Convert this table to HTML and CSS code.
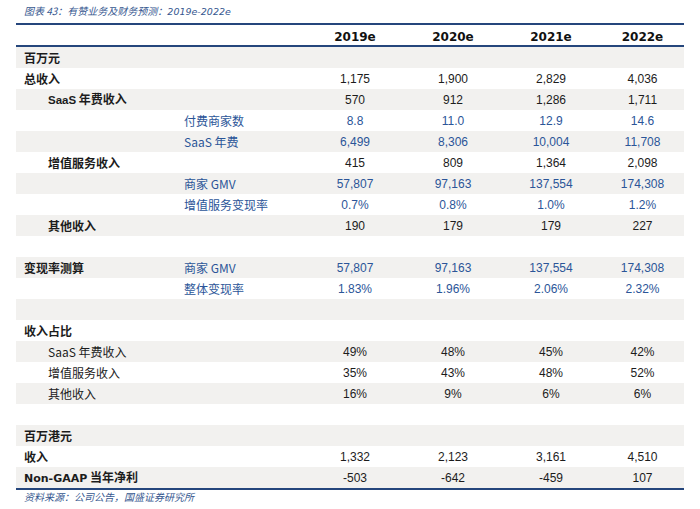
FILE: index.html
```html
<!DOCTYPE html>
<html lang="zh-CN">
<head>
<meta charset="utf-8">
<title>有赞业务及财务预测</title>
<link rel="stylesheet" href="styles.css">
</head>
<body>
<div class="page">
  <div class="caption">图表 43：有赞业务及财务预测：<span class="lat">2019e-2022e</span></div>
  <table class="fin">
    <colgroup>
      <col class="c-a"><col class="c-b"><col class="c-1"><col class="c-2"><col class="c-3"><col class="c-4">
    </colgroup>
    <thead>
      <tr><th></th><th></th><th>2019e</th><th>2020e</th><th>2021e</th><th>2022e</th></tr>
    </thead>
    <tbody>
      <tr><td class="l1 b">百万元</td><td></td><td></td><td></td><td></td><td></td></tr>
      <tr><td class="l1 b">总收入</td><td></td><td>1,175</td><td>1,900</td><td>2,829</td><td>4,036</td></tr>
      <tr><td class="l2 b"><span class="latb">SaaS</span> 年费收入</td><td></td><td>570</td><td>912</td><td>1,286</td><td>1,711</td></tr>
      <tr class="blue"><td></td><td class="l3">付费商家数</td><td>8.8</td><td>11.0</td><td>12.9</td><td>14.6</td></tr>
      <tr class="blue"><td></td><td class="l3">SaaS 年费</td><td>6,499</td><td>8,306</td><td>10,004</td><td>11,708</td></tr>
      <tr><td class="l2 b">增值服务收入</td><td></td><td>415</td><td>809</td><td>1,364</td><td>2,098</td></tr>
      <tr class="blue"><td></td><td class="l3">商家 GMV</td><td>57,807</td><td>97,163</td><td>137,554</td><td>174,308</td></tr>
      <tr class="blue"><td></td><td class="l3">增值服务变现率</td><td>0.7%</td><td>0.8%</td><td>1.0%</td><td>1.2%</td></tr>
      <tr><td class="l2 b">其他收入</td><td></td><td>190</td><td>179</td><td>179</td><td>227</td></tr>
      <tr><td></td><td></td><td></td><td></td><td></td><td></td></tr>
      <tr class="blue"><td class="l1 b dark">变现率测算</td><td class="l3">商家 GMV</td><td>57,807</td><td>97,163</td><td>137,554</td><td>174,308</td></tr>
      <tr class="blue"><td></td><td class="l3">整体变现率</td><td>1.83%</td><td>1.96%</td><td>2.06%</td><td>2.32%</td></tr>
      <tr><td></td><td></td><td></td><td></td><td></td><td></td></tr>
      <tr><td class="l1 b">收入占比</td><td></td><td></td><td></td><td></td><td></td></tr>
      <tr><td class="l2">SaaS 年费收入</td><td></td><td>49%</td><td>48%</td><td>45%</td><td>42%</td></tr>
      <tr><td class="l2">增值服务收入</td><td></td><td>35%</td><td>43%</td><td>48%</td><td>52%</td></tr>
      <tr><td class="l2">其他收入</td><td></td><td>16%</td><td>9%</td><td>6%</td><td>6%</td></tr>
      <tr><td></td><td></td><td></td><td></td><td></td><td></td></tr>
      <tr><td class="l1 b">百万港元</td><td></td><td></td><td></td><td></td><td></td></tr>
      <tr><td class="l1 b">收入</td><td></td><td>1,332</td><td>2,123</td><td>3,161</td><td>4,510</td></tr>
      <tr><td class="l1 b"><span class="nong">Non-GAAP</span> 当年净利</td><td></td><td>-503</td><td>-642</td><td>-459</td><td>107</td></tr>
    </tbody>
  </table>
  <div class="source">资料来源：公司公告，国盛证券研究所</div>
</div>
</body>
</html>
```

FILE: styles.css
```css
html, body {
  margin: 0;
  padding: 0;
  background: #ffffff;
}

.page {
  padding-left: 16px;
  width: 668px;
  font-family: "Liberation Sans", "Noto Sans CJK SC", sans-serif;
  color: #1c1c1c;
}

.caption {
  height: 23px;
  line-height: 22px;
  padding-left: 8px;
  font-size: 10px;
  font-style: italic;
  color: #36578f;
  font-family: "Noto Sans CJK SC", sans-serif;
}

.caption .lat {
  font-family: "DejaVu Sans", sans-serif;
  font-size: 9.5px;
}

.fin {
  width: 668px;
  border-collapse: collapse;
  table-layout: fixed;
  border-top: 2px solid #25467c;
  border-bottom: 2px solid #25467c;
  font-size: 12px;
}

.c-a { width: 160px; }
.c-b { width: 129px; }
.c-1 { width: 100px; }
.c-2 { width: 96px; }
.c-3 { width: 100px; }
.c-4 { width: 83px; }

.fin th {
  height: 20px;
  padding: 0;
  line-height: 16px;
  vertical-align: bottom;
  font-family: "DejaVu Sans", sans-serif;
  font-weight: bold;
  font-size: 12px;
  text-align: center;
  color: #111111;
  border-bottom: 2px solid #25467c;
}

.fin td {
  height: 21px;
  padding: 0;
  text-align: center;
  white-space: nowrap;
  line-height: 16px;
}

.fin tbody tr:nth-child(odd) {
  background: #f2f1ef;
}

.fin td.l1,
.fin td.l2,
.fin td.l3 {
  text-align: left;
  font-family: "Noto Sans CJK SC", sans-serif;
}

.fin td.l1 { padding-left: 8px; }
.fin td.l2 { padding-left: 32px; }
.fin td.l3 { padding-left: 8px; }

.fin td.b {
  font-weight: 700;
}

.lat {
  font-family: "Liberation Sans", sans-serif;
}

.latb {
  font-family: "Liberation Sans", sans-serif;
  font-weight: bold;
  font-size: 11.5px;
}

.nong {
  font-family: "DejaVu Sans", sans-serif;
  font-size: 11px;
  font-weight: bold;
}

.blue td {
  color: #2b5598;
}

.blue td.dark {
  color: #1c1c1c;
}

.source {
  padding-left: 8px;
  height: 18px;
  line-height: 13px;
  font-size: 10px;
  font-style: italic;
  color: #36578f;
  font-family: "Noto Sans CJK SC", sans-serif;
}
```
